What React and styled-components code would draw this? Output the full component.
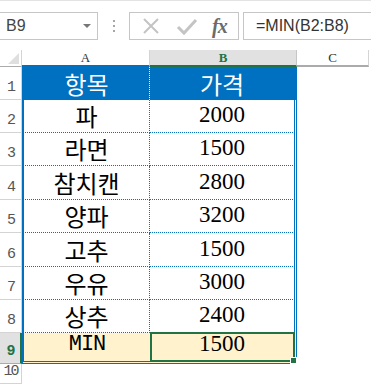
import React from "react";
import styled, { createGlobalStyle } from "styled-components";

const GlobalStyle = createGlobalStyle`
  html, body {
    margin: 0;
    padding: 0;
    background: #ffffff;
  }
  body {
    width: 371px;
    height: 390px;
    overflow: hidden;
    font-family: "Liberation Sans", Arial, sans-serif;
  }
`;

const rows = [
  { name: "항목", price: "가격", head: true },
  { name: "파", price: "2000" },
  { name: "라면", price: "1500" },
  { name: "참치캔", price: "2800" },
  { name: "양파", price: "3200" },
  { name: "고추", price: "1500" },
  { name: "우유", price: "3000" },
  { name: "상추", price: "2400" },
];

const BLUE = "#0070c0";
const GREEN = "#217346";
const SERIF = `"Liberation Serif", "DejaVu Serif", serif`;

const Window = styled.div`
  width: 371px;
  height: 390px;
  display: flex;
  flex-direction: column;
  border-top: 1px solid #e3e3e3;
  box-sizing: border-box;
`;

const FormulaBar = styled.div`
  height: 49px;
  flex-shrink: 0;
  display: flex;
  align-items: center;
  padding-top: 1px;
  box-sizing: border-box;
`;

const NameBox = styled.div`
  width: 99px;
  height: 28px;
  margin-left: -1px;
  border: 1px solid #c6c6c6;
  display: flex;
  align-items: center;
  justify-content: space-between;
  padding: 0 6px;
  box-sizing: border-box;
  font-size: 16px;
  color: #444;
`;

const Caret = styled.span`
  width: 0;
  height: 0;
  border-left: 4px solid transparent;
  border-right: 4px solid transparent;
  border-top: 4px solid #777;
`;

const Dots = styled.div`
  width: 31px;
  display: flex;
  flex-direction: column;
  align-items: center;
  gap: 3px;

  span {
    width: 2px;
    height: 2px;
    background: #a6a6a6;
  }
`;

const ButtonBox = styled.div`
  width: 110px;
  height: 28px;
  border: 1px solid #c6c6c6;
  box-sizing: border-box;
  display: flex;
  align-items: center;
  justify-content: space-around;
  padding: 0 4px;
`;

const Fx = styled.span`
  font-family: ${SERIF};
  font-style: italic;
  font-weight: bold;
  font-size: 20px;
  color: #6b6b6b;
  letter-spacing: -1px;
`;

const FormulaInput = styled.div`
  flex: 1;
  height: 28px;
  margin-left: 4px;
  margin-right: -2px;
  border: 1px solid #c6c6c6;
  box-sizing: border-box;
  display: flex;
  align-items: center;
  padding-left: 12px;
  font-size: 16px;
  color: #333;
`;

const Sheet = styled.div`
  display: grid;
  grid-template-columns: 22px 128px 147px 72px 1fr;
  grid-template-rows: 17px 33px 33px 33px 34px 33px 34px 33px 33px 31px 20px 1fr;
  flex: 1;
`;

const Corner = styled.div`
  border-right: 1px solid #d4d4d4;
  border-bottom: 1px solid #ababab;
  position: relative;
  box-sizing: border-box;

  &::after {
    content: "";
    position: absolute;
    right: 2px;
    bottom: 2px;
    border-left: 11px solid transparent;
    border-bottom: 11px solid #dfdfdf;
  }
`;

const ColHead = styled.div`
  display: flex;
  align-items: center;
  justify-content: center;
  box-sizing: border-box;
  background: ${({ $active }) => ($active ? "#e1e1e1" : "#ffffff")};
  border-bottom: 2px solid ${({ $line }) => $line};
  border-right: 1px solid ${({ $active }) => ($active ? "#c6c6c6" : "#d4d4d4")};
  font-family: ${SERIF};
  font-size: 13px;
  font-weight: ${({ $active }) => ($active ? "bold" : "normal")};
  color: ${({ $active }) => ($active ? GREEN : "#333")};
  padding-top: 1px;
`;

const RowHead = styled.div`
  display: flex;
  align-items: flex-end;
  justify-content: center;
  box-sizing: border-box;
  background: ${({ $active }) => ($active ? "#e1e1e1" : "#ffffff")};
  border-right: ${({ $active }) => ($active ? `2px solid ${GREEN}` : "1px solid #d4d4d4")};
  border-bottom: 1px solid ${({ $active }) => ($active ? "#ababab" : "#d4d4d4")};
  font-family: "Liberation Mono", monospace;
  font-size: 15px;
  font-weight: ${({ $active }) => ($active ? "bold" : "normal")};
  color: ${({ $active }) => ($active ? GREEN : "#555")};
  padding-bottom: 3px;
  letter-spacing: -2px;
  overflow: hidden;
`;

const Cell = styled.div`
  position: relative;
  display: flex;
  align-items: flex-end;
  justify-content: center;
  box-sizing: border-box;
  background: ${({ $bg }) => $bg || "transparent"};
  color: ${({ $color }) => $color || "#000"};
  border-left: ${({ $left }) => $left || "none"};
  border-right: ${({ $right }) => $right || "none"};
  border-bottom: ${({ $bottom }) => $bottom || "none"};
  line-height: 1;
`;

const NameCell = styled(Cell)`
  font-family: "Noto Sans CJK KR", "Noto Sans", sans-serif;
  font-size: 24px;
  padding-bottom: 4px;
`;

const PriceCell = styled(Cell)`
  font-family: ${SERIF};
  font-size: 23px;
  padding-bottom: 6px;
`;

const HeadPriceCell = styled(NameCell)``;

const MinLabel = styled(Cell)`
  font-family: "Liberation Mono", "Courier New", monospace;
  font-size: 22px;
  letter-spacing: -1px;
  padding-bottom: 5px;
`;

const Selection = styled.div`
  position: absolute;
  left: 0;
  top: -1px;
  right: -1px;
  bottom: -1px;
  border: 2px solid ${GREEN};

  &::after {
    content: "";
    position: absolute;
    right: -4px;
    bottom: -4px;
    width: 5px;
    height: 5px;
    background: ${GREEN};
    border: 1px solid #fff;
  }
`;

const Blank = styled.div``;

const XIcon = () => (
  <svg width="20" height="20" viewBox="0 0 20 20">
    <path d="M3 3 L17 17 M17 3 L3 17" stroke="#c4c4c4" strokeWidth="2" fill="none" />
  </svg>
);

const CheckIcon = () => (
  <svg width="22" height="20" viewBox="0 0 22 20">
    <path d="M2 11 L8 17 L20 4" stroke="#c4c4c4" strokeWidth="3" fill="none" />
  </svg>
);

const App = () => {
  return (
    <>
      <GlobalStyle />
      <Window>
        <FormulaBar>
          <NameBox>
            B9
            <Caret />
          </NameBox>
          <Dots>
            <span />
            <span />
            <span />
          </Dots>
          <ButtonBox>
            <XIcon />
            <CheckIcon />
            <Fx>fx</Fx>
          </ButtonBox>
          <FormulaInput>=MIN(B2:B8)</FormulaInput>
        </FormulaBar>
        <Sheet>
          <Corner />
          <ColHead $line={BLUE}>A</ColHead>
          <ColHead $line={GREEN} $active>B</ColHead>
          <ColHead $line="#ababab">C</ColHead>
          <Blank />

          {rows.map((row, i) => {
            const bottom = row.head ? "none" : `1px dotted ${BLUE}`;
            const Price = row.head ? HeadPriceCell : PriceCell;
            return (
              <React.Fragment key={i}>
                <RowHead>{i + 1}</RowHead>
                <NameCell
                  $bg={row.head ? BLUE : undefined}
                  $color={row.head ? "#fff" : undefined}
                  $left={`2px solid ${BLUE}`}
                  $right={`1px dotted ${row.head ? "#fff" : BLUE}`}
                  $bottom={bottom}
                >
                  {row.name}
                </NameCell>
                <Price
                  $bg={row.head ? BLUE : undefined}
                  $color={row.head ? "#fff" : undefined}
                  $right={`3px double ${BLUE}`}
                  $bottom={bottom}
                >
                  {row.price}
                </Price>
                <Blank />
                <Blank />
              </React.Fragment>
            );
          })}

          <RowHead $active>9</RowHead>
          <MinLabel
            $bg="#fff2cc"
            $left={`2px solid ${BLUE}`}
            $bottom={`3px double ${BLUE}`}
          >
            MIN
          </MinLabel>
          <PriceCell
            $bg="#fff2cc"
            $right={`3px double ${BLUE}`}
            $bottom={`3px double ${BLUE}`}
          >
            1500
            <Selection />
          </PriceCell>
          <Blank />
          <Blank />

          <RowHead>10</RowHead>
        </Sheet>
      </Window>
    </>
  );
};

export default App;
